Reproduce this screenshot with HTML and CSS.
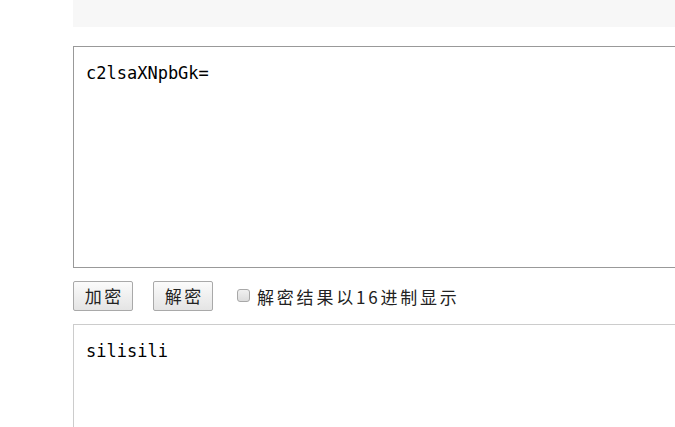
FILE: index.html
```html
<!DOCTYPE html>
<html lang="zh-CN">
<head>
<meta charset="utf-8">
<title>Base64</title>
<link rel="stylesheet" href="styles.css">
</head>
<body>
<div class="page">
  <div class="topbar"></div>
  <textarea class="box box-input">c2lsaXNpbGk=</textarea>
  <div class="controls">
    <button class="btn" type="button">加密</button>
    <button class="btn" type="button">解密</button>
    <label class="hex">
      <input class="check" type="checkbox">
      <span class="hex-text">解密结果以16进制显示</span>
    </label>
  </div>
  <textarea class="box box-output">silisili</textarea>
</div>
</body>
</html>
```

FILE: styles.css
```css
html, body {
  margin: 0;
  padding: 0;
  background: #fff;
}

.page {
  width: 675px;
  height: 427px;
  overflow: hidden;
  padding-left: 73px;
  box-sizing: border-box;
}

.topbar {
  width: 700px;
  height: 27px;
  background: #f7f7f7;
  margin-bottom: 19px;
}

.box {
  display: block;
  box-sizing: border-box;
  width: 700px;
  margin: 0;
  padding: 16px 12px;
  font-family: "DejaVu Sans Mono", monospace;
  font-size: 17px;
  color: #000;
  background: #fff;
  resize: none;
  outline: none;
}

.box-input {
  height: 222px;
  border: 1px solid #999;
}

.box-output {
  height: 200px;
  border: 1px solid #ccc;
}

.controls {
  display: flex;
  align-items: center;
  height: 30px;
  margin: 13px 0;
}

.btn {
  width: 60px;
  height: 30px;
  margin: 0 20px 0 0;
  padding: 0;
  box-sizing: border-box;
  border: 1px solid #a9a9a9;
  border-radius: 2px;
  background: linear-gradient(#fbfbfb, #e4e4e4);
  font-family: "Noto Sans CJK SC", sans-serif;
  font-size: 17px;
  letter-spacing: 2.5px;
  text-indent: 2.5px;
  color: #222;
  line-height: 28px;
}

.hex {
  display: flex;
  align-items: center;
  margin-left: 4px;
}

.check {
  -webkit-appearance: none;
  appearance: none;
  width: 13px;
  height: 13px;
  margin: 0 7px 0 0;
  box-sizing: border-box;
  border: 1px solid #a8a8a8;
  border-radius: 3px;
  background: linear-gradient(#f0f0f0, #dcdcdc);
  position: relative;
  top: -1px;
}

.hex-text {
  font-family: "Noto Sans CJK SC", sans-serif;
  font-size: 17px;
  letter-spacing: 2.8px;
  color: #222;
}
```
